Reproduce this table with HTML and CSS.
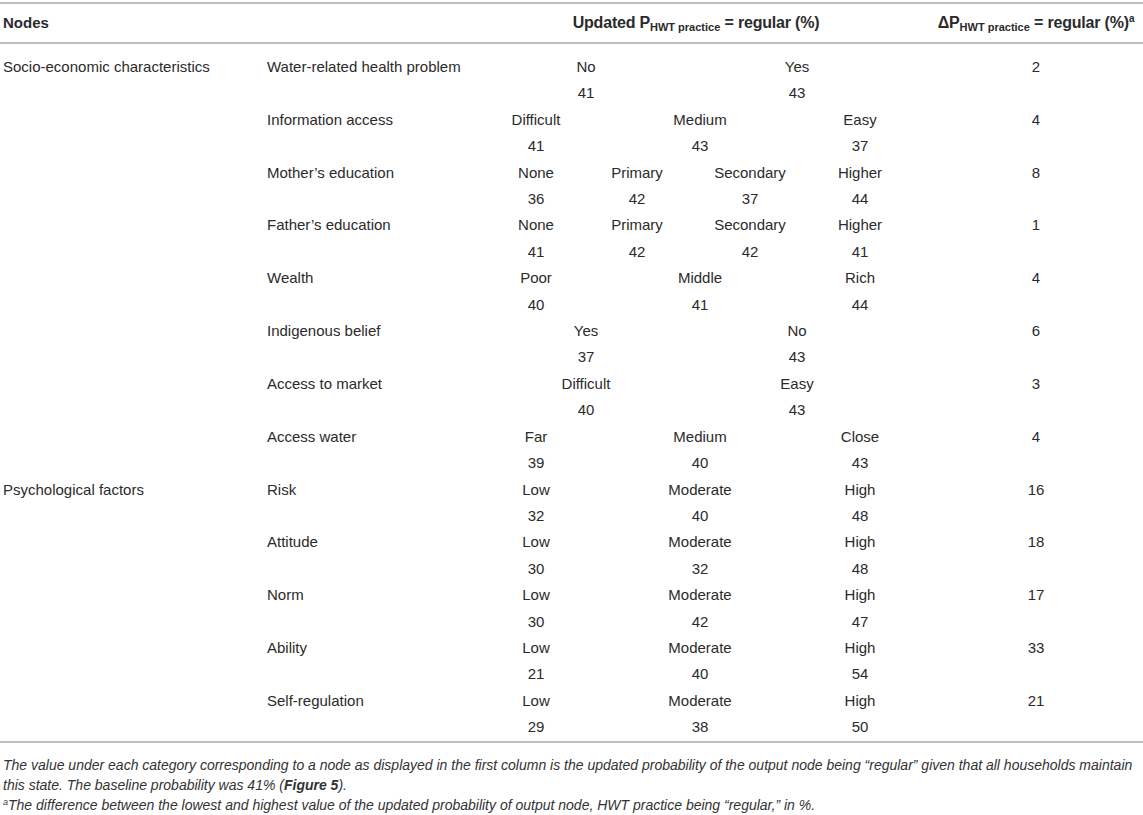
FILE: index.html
```html
<!DOCTYPE html>
<html lang="en">
  <head>
    <meta charset="UTF-8" />
    <title>Updated probability of HWT practice</title>
    <link rel="stylesheet" href="styles.css">
  </head>
  <body>
    <table class="results">
      <colgroup>
        <col class="col-group" />
        <col class="col-node" />
        <col class="col-c1" />
        <col class="col-c2" />
        <col class="col-c3" />
        <col class="col-c4" />
        <col class="col-delta" />
      </colgroup>
      <thead>
        <tr>
          <th class="left">Nodes</th>
          <th></th>
          <th colspan="4" class="narrow">Updated P<sub>HWT practice</sub> = regular (%)</th>
          <th class="narrow delta">&Delta;P<sub>HWT practice</sub> = regular (%)<sup>a</sup></th>
        </tr>
      </thead>
      <tbody>
        <tr>
          <td class="left">Socio-economic characteristics</td>
          <td class="node">Water-related health problem</td>
          <td colspan="2">No<br />41</td>
          <td colspan="2">Yes<br />43</td>
          <td class="delta">2</td>
        </tr>
        <tr>
          <td></td>
          <td class="node">Information access</td>
          <td>Difficult<br />41</td>
          <td colspan="2">Medium<br />43</td>
          <td>Easy<br />37</td>
          <td class="delta">4</td>
        </tr>
        <tr>
          <td></td>
          <td class="node">Mother’s education</td>
          <td>None<br />36</td>
          <td>Primary<br />42</td>
          <td>Secondary<br />37</td>
          <td>Higher<br />44</td>
          <td class="delta">8</td>
        </tr>
        <tr>
          <td></td>
          <td class="node">Father’s education</td>
          <td>None<br />41</td>
          <td>Primary<br />42</td>
          <td>Secondary<br />42</td>
          <td>Higher<br />41</td>
          <td class="delta">1</td>
        </tr>
        <tr>
          <td></td>
          <td class="node">Wealth</td>
          <td>Poor<br />40</td>
          <td colspan="2">Middle<br />41</td>
          <td>Rich<br />44</td>
          <td class="delta">4</td>
        </tr>
        <tr>
          <td></td>
          <td class="node">Indigenous belief</td>
          <td colspan="2">Yes<br />37</td>
          <td colspan="2">No<br />43</td>
          <td class="delta">6</td>
        </tr>
        <tr>
          <td></td>
          <td class="node">Access to market</td>
          <td colspan="2">Difficult<br />40</td>
          <td colspan="2">Easy<br />43</td>
          <td class="delta">3</td>
        </tr>
        <tr>
          <td></td>
          <td class="node">Access water</td>
          <td>Far<br />39</td>
          <td colspan="2">Medium<br />40</td>
          <td>Close<br />43</td>
          <td class="delta">4</td>
        </tr>
        <tr>
          <td class="left">Psychological factors</td>
          <td class="node">Risk</td>
          <td>Low<br />32</td>
          <td colspan="2">Moderate<br />40</td>
          <td>High<br />48</td>
          <td class="delta">16</td>
        </tr>
        <tr>
          <td></td>
          <td class="node">Attitude</td>
          <td>Low<br />30</td>
          <td colspan="2">Moderate<br />32</td>
          <td>High<br />48</td>
          <td class="delta">18</td>
        </tr>
        <tr>
          <td></td>
          <td class="node">Norm</td>
          <td>Low<br />30</td>
          <td colspan="2">Moderate<br />42</td>
          <td>High<br />47</td>
          <td class="delta">17</td>
        </tr>
        <tr>
          <td></td>
          <td class="node">Ability</td>
          <td>Low<br />21</td>
          <td colspan="2">Moderate<br />40</td>
          <td>High<br />54</td>
          <td class="delta">33</td>
        </tr>
        <tr>
          <td></td>
          <td class="node">Self-regulation</td>
          <td>Low<br />29</td>
          <td colspan="2">Moderate<br />38</td>
          <td>High<br />50</td>
          <td class="delta">21</td>
        </tr>
      </tbody>
    </table>

    <div class="notes">
      <p>The value under each category corresponding to a node as displayed in the first column is the updated probability of the output node being “regular” given that all households maintain this state. The baseline probability was 41% (<b>Figure 5</b>).</p>
      <p><sup>a</sup>The difference between the lowest and highest value of the updated probability of output node, HWT practice being “regular,” in %.</p>
    </div>
  </body>
</html>
```

FILE: styles.css
```css
body {
  margin: 0;
  padding-top: 2px;
  font-family: "Liberation Sans", Arial, sans-serif;
  font-size: 15px;
  color: #2b2b2b;
  background: #fff;
}
sub,
sup {
  line-height: 0;
}
.results {
  width: 1143px;
  border-collapse: collapse;
  table-layout: fixed;
}
.col-group { width: 264px; }
.col-node { width: 221px; }
.col-c1 { width: 102px; }
.col-c2 { width: 100px; }
.col-c3 { width: 126px; }
.col-c4 { width: 94px; }
.col-delta { width: 236px; }

.results thead tr {
  border-top: 2px solid #bdbdbd;
  border-bottom: 2px solid #bdbdbd;
}
.results th {
  padding: 10px 0;
  height: 18px;
  line-height: 18px;
  font-weight: bold;
  text-align: center;
  white-space: nowrap;
}
.results tbody tr:last-child {
  border-bottom: 2px solid #bdbdbd;
}
.results td {
  padding: 0;
  line-height: 26.4px;
  vertical-align: top;
  text-align: center;
  white-space: nowrap;
}
.results tbody tr:first-child td {
  padding-top: 10px;
}
.results .left,
.results .node {
  text-align: left;
  padding-left: 3px;
}
.results .delta {
  padding-left: 22px;
}
.narrow {
  font-size: 16px;
  letter-spacing: -0.2px;
}
.narrow sub {
  font-size: 11px;
  letter-spacing: 0;
  vertical-align: -3px;
}
.narrow sup {
  font-size: 10px;
  vertical-align: 6px;
}

.notes {
  padding: 12px 3px 0;
  font-style: italic;
  font-size: 14px;
  line-height: 20px;
  color: #333;
}
.notes p {
  margin: 0;
}
.notes sup {
  font-size: 9px;
  vertical-align: 5px;
}
```
